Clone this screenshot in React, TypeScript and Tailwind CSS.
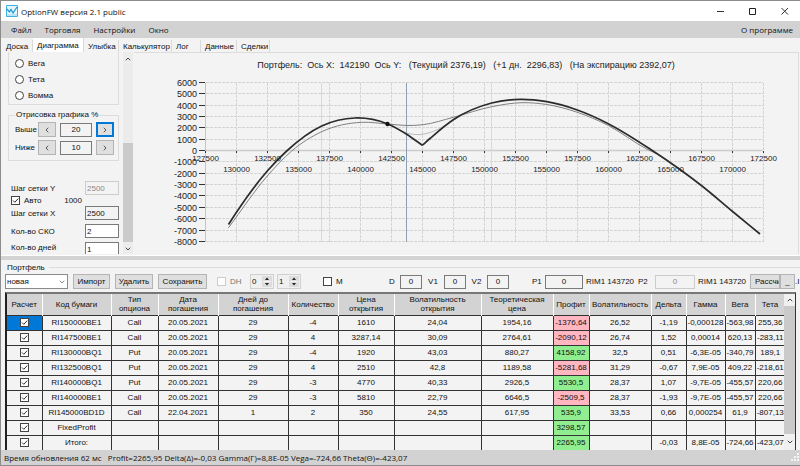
import { useState } from "react";
import type { ReactNode } from "react";
import clsx from "clsx";
import { ChevronDown, ChevronLeft, ChevronRight, ChevronUp } from "lucide-react";

const menu = ["Файл", "Торговля", "Настройки", "Окно"];

const tabs = [
  { name: "Доска", width: "w-[31px]" },
  { name: "Диаграмма", width: "w-[51px]" },
  { name: "Улыбка", width: "w-[35px]" },
  { name: "Калькулятор", width: "w-[53px]" },
  { name: "Лог", width: "w-[29px]" },
  { name: "Данные", width: "w-[36px]" },
  { name: "Сделки", width: "w-[33px]" },
];

const columns = [
  { title: "Расчет", width: "w-[35px]" },
  { title: "Код бумаги", width: "w-[69px]" },
  { title: "Тип опциона", width: "w-[47px]" },
  { title: "Дата погашения", width: "w-[60px]" },
  { title: "Дней до погашения", width: "w-[70px]" },
  { title: "Количество", width: "w-[50px]" },
  { title: "Цена открытия", width: "w-[56px]" },
  { title: "Волатильность открытия", width: "w-[87px]" },
  { title: "Теоретическая цена", width: "w-[72px]" },
  { title: "Профит", width: "w-[36px]" },
  { title: "Волатильность", width: "w-[62px]" },
  { title: "Дельта", width: "w-[35px]" },
  { title: "Гамма", width: "w-[39px]" },
  { title: "Вега", width: "w-[30px]" },
  { title: "Тета", width: "w-[30px]" },
];

const PROFIT = 8;

const rows = [
  ["RI150000BE1", "Call", "20.05.2021", "29", "-4", "1610", "24,04", "1954,16", "-1376,64", "26,52", "-1,19", "-0,000128", "-563,98", "255,36"],
  ["RI147500BE1", "Call", "20.05.2021", "29", "4", "3287,14", "30,09", "2764,61", "-2090,12", "26,74", "1,52", "0,00014", "620,13", "-283,11"],
  ["RI130000BQ1", "Put", "20.05.2021", "29", "-4", "1920", "43,03", "880,27", "4158,92", "32,5", "0,51", "-6,3E-05", "-340,79", "189,1"],
  ["RI132500BQ1", "Put", "20.05.2021", "29", "4", "2510", "42,8", "1189,58", "-5281,68", "31,29", "-0,67", "7,9E-05", "409,22", "-218,61"],
  ["RI140000BQ1", "Put", "20.05.2021", "29", "-3", "4770", "40,33", "2926,5", "5530,5", "28,37", "1,07", "-9,7E-05", "-455,57", "220,66"],
  ["RI140000BE1", "Call", "20.05.2021", "29", "-3", "5810", "22,79", "6646,5", "-2509,5", "28,37", "-1,93", "-9,7E-05", "-455,57", "220,66"],
  ["RI145000BD1D", "Call", "22.04.2021", "1", "2", "350", "24,55", "617,95", "535,9", "33,53", "0,66", "0,000254", "61,9", "-807,13"],
  ["FixedProfit", "", "", "", "", "", "", "", "3298,57", "", "", "", "", ""],
  ["Итого:", "", "", "", "", "", "", "", "2265,95", "", "-0,03", "8,8E-05", "-724,66", "-423,07"],
];

type Point = [number, number];

const expiryLeft: Point[] = [[94.5, 172.5], [102.3, 160.5], [133.3, 119], [152.7, 99], [187.7, 74], [221, 66], [253.7, 72], [272.7, 82.3], [288.3, 93.3]];
const expiryRight: Point[] = [[288.3, 93.3], [296, 86.5], [320, 67.3], [357.7, 51], [386, 47.3], [412.7, 49.7], [443.3, 58], [474.3, 71.7], [516, 97], [546, 117.5], [568, 134], [598, 159], [626, 182]];
const current: Point[] = [[94.5, 175.7], [133.3, 124], [157.7, 99], [187.7, 79.7], [227.7, 70.3], [253.7, 72], [272.7, 73.5], [289, 72.7], [319.3, 65.3], [357.7, 54.7], [388, 50.7], [412.7, 52.5], [443.3, 60.3], [474.3, 73.5], [512.7, 97], [522, 101.5]];
const nextDay: Point[] = [[253.7, 72], [272, 80.8], [285, 82.6], [299, 79.5], [323, 66]];

const slope = (a: Point, b: Point) => (b[1] - a[1]) / (b[0] - a[0]);

// slope of the parabola through a point and its two neighbours
const tangent = (points: Point[], i: number) => {
  const prev = points[i - 1];
  const point = points[i];
  const next = points[i + 1];
  if (!prev) return slope(point, next);
  if (!next) return slope(prev, point);
  const h0 = point[0] - prev[0];
  const h1 = next[0] - point[0];
  return (slope(prev, point) * h1 + slope(point, next) * h0) / (h0 + h1);
};

const toPath = (points: Point[]) => {
  let d = `M${points[0][0]} ${points[0][1]}`;
  for (let i = 0; i < points.length - 1; i++) {
    const [x1, y1] = points[i];
    const [x2, y2] = points[i + 1];
    const h = (x2 - x1) / 3;
    d += `C${x1 + h} ${y1 + tangent(points, i) * h} ${x2 - h} ${y2 - tangent(points, i + 1) * h} ${x2} ${y2}`;
  }
  return d;
};

const chartX = (value: number) => Math.round(72 + ((value - 127500) / 2500) * 30.98) - 0.5;
const chartY = (value: number) => Math.round(99 - (value / 1000) * 11.36) - 0.5;

const xValues = Array.from({ length: 19 }, (_, i) => 127500 + i * 2500);
const yValues = Array.from({ length: 15 }, (_, i) => 6000 - i * 1000);

const Chart = () => (
  <svg viewBox="0 1 664 201" className="block w-full" role="img" aria-label="Портфель">
    <g stroke="#d3d3d3" strokeDasharray="3 1">
      {xValues.slice(1).map((x) => (
        <path key={x} d={`M${chartX(x)} 31V190`} />
      ))}
      {yValues.map((y) => (
        <path key={y} d={`M72 ${chartY(y)}H629`} />
      ))}
    </g>
    <path d="M71.5 31V190" stroke="#c4c4c4" />
    <path d="M72 98.5H629" stroke="#cccccc" strokeWidth="1.5" />
    <path d="M187.5 31V190M357.5 31V190" stroke="#f8cdd0" />
    <path d="M272.5 31V190" stroke="#8f9fb2" />
    <g stroke="#333">
      {yValues.map((y) => (
        <path key={y} d={`M65 ${chartY(y)}H71`} />
      ))}
      {xValues.map((x) => (
        <path key={x} d={`M${chartX(x)} 99V101`} />
      ))}
    </g>
    <g fill="none">
      <path d={toPath(nextDay)} stroke="#bcbcbc" />
      <path d={toPath(current)} stroke="#808080" />
      <path d={toPath(expiryLeft) + toPath(expiryRight)} stroke="#2b2b2b" strokeWidth="1.7" />
    </g>
    <circle cx="253.5" cy="72" r="2.2" fill="#111" />
    <g fill="#222" className="text-[9px]" textAnchor="end">
      {yValues.map((y) => (
        <text key={y} x="63" y={chartY(y) + 3.5}>
          {y}
        </text>
      ))}
    </g>
    <g fill="#222" className="text-[8px]" textAnchor="middle">
      {xValues.map((x, i) => (
        <text key={x} x={chartX(x)} y={i % 2 ? 120 : 109}>
          {x}
        </text>
      ))}
    </g>
    <text x="332" y="16" fill="#222" className="whitespace-pre text-[9px]" textAnchor="middle">
      {"Портфель:  Ось X:  142190  Ось Y:   (Текущий 2376,19)   (+1 дн.  2296,83)   (На экспирацию 2392,07)"}
    </text>
  </svg>
);

const Check = ({ label, checked, disabled }: { label: string; checked?: boolean; disabled?: boolean }) => (
  <span className="grid h-[9px] w-[9px] shrink-0">
    <input
      type="checkbox"
      aria-label={label}
      defaultChecked={checked}
      disabled={disabled}
      className="peer col-start-1 row-start-1 h-[9px] w-[9px] appearance-none border border-[#444] bg-white disabled:border-[#ccc]"
    />
    <svg viewBox="0 0 9 9" className="pointer-events-none invisible col-start-1 row-start-1 peer-checked:visible">
      <path d="M2 4.5L3.8 6.3L7.2 2.6" fill="none" stroke="#333" />
    </svg>
  </span>
);

const Button = ({ children, className }: { children: ReactNode; className?: string }) => (
  <button
    type="button"
    className={clsx("flex h-[15px] shrink-0 items-center justify-center overflow-hidden border border-[#b4b4b4] bg-[#dfdfdf]", className)}
  >
    {children}
  </button>
);

const Box = ({ label, value, className, disabled }: { label: string; value: string; className?: string; disabled?: boolean }) => (
  <input
    type="text"
    aria-label={label}
    defaultValue={value}
    disabled={disabled}
    className={clsx("h-[14px] min-w-0 shrink-0 border border-[#7a7a7a] disabled:border-[#ccc] disabled:text-[#8a8a8a]", className)}
  />
);

const Spinner = ({ label, value }: { label: string; value: string }) => (
  <span className="flex h-[15px] w-[24px] shrink-0 items-center border border-[#d0d0d0] bg-[#f0f0f0]">
    <input type="text" aria-label={label} defaultValue={value} className="w-[11px] pl-px" />
    <svg viewBox="0 0 10 11" className="h-[11px] w-[10px]">
      <path d="M0 0H10V11H0Z" fill="#dcdcdc" />
      <path d="M3 4L5 1.5L7 4ZM3 7L5 9.5L7 7Z" fill="#222" />
      <path d="M1 5.5H9" stroke="#f6f6f6" />
    </svg>
  </span>
);

const TitleBar = () => (
  <header className="flex h-[21px] items-center border-t border-[#8c8c8c] bg-white pr-[11px] pl-[5px]">
    <svg viewBox="0 0 12 12" className="h-[12px] w-[12px]">
      <path d="M.5.5H11.5V11.5H.5Z" fill="#e8f6fc" stroke="#3db2e2" />
      <path d="M1 4L3.5 7L5 4.5L7 8L11 2" fill="none" stroke="#1c9bd6" strokeWidth="1.3" />
      <path d="M1 10H11" stroke="#8dd3f0" />
    </svg>
    <h1 className="ml-[3px] flex-1 font-['Open_Sans']">OptionFW версия 2.1 public</h1>
    <div className="flex gap-[24px]">
      <button type="button" aria-label="Свернуть">
        <svg viewBox="0 0 8 8" className="h-2 w-2"><path d="M0 4.5H7" stroke="#333" /></svg>
      </button>
      <button type="button" aria-label="Развернуть">
        <svg viewBox="0 0 8 8" className="h-2 w-2"><path d="M.5 1.5H6.5V7.5H.5Z" fill="none" stroke="#222" /></svg>
      </button>
      <button type="button" aria-label="Закрыть">
        <svg viewBox="0 0 8 8" className="h-2 w-2"><path d="M.5 1L7 7.5M7 1L.5 7.5" stroke="#333" /></svg>
      </button>
    </div>
  </header>
);

const Sidebar = () => (
  <aside className="flex w-[133px] shrink-0 justify-between overflow-hidden">
    <div className="ml-[7px] w-[111px]">
      <div className="h-[53px] border border-t-0 border-[#dcdcdc] pt-[3px] pl-[6px]">
        {["Вега", "Тета", "Вомма"].map((name) => (
          <label key={name} className="flex h-4 items-center gap-1">
            <input type="radio" name="greek" className="h-[9px] w-[9px] appearance-none rounded-full border border-[#444] bg-white checked:border-[3px]" />
            {name}
          </label>
        ))}
      </div>
      <fieldset className="mt-[5px] h-[51px] border border-[#dcdcdc] pl-[6px]">
        <legend className="px-px leading-[10px]">Отрисовка графика %</legend>
        {[["Выше", "20"], ["Ниже", "10"]].map(([name, value]) => (
          <div key={name} className="mt-px flex h-[17px] items-center">
            <span className="w-[23px]">{name}</span>
            <Button className="w-[18px]"><ChevronLeft size={8} /></Button>
            <Box label={name} value={value} className="mx-1 w-[32px] text-center" />
            <Button className={clsx("w-[18px]", name === "Выше" && "outline-2 -outline-offset-2 outline-[#0078d7]")}>
              <ChevronRight size={8} />
            </Button>
          </div>
        ))}
      </fieldset>
      <div className="mt-[20px] flex items-center justify-between pl-[3px]">
        Шаг сетки Y
        <Box label="Шаг сетки Y" value="2500" disabled className="w-[34px] px-px" />
      </div>
      <div className="flex h-[11px] items-center pl-[3px]">
        <Check label="Авто" checked />
        <span className="ml-1">Авто</span>
        <span className="ml-auto pr-[37px]">1000</span>
      </div>
      <div className="flex items-center justify-between pl-[3px]">
        Шаг сетки X
        <Box label="Шаг сетки X" value="2500" className="w-[34px] px-px" />
      </div>
      <div className="mt-1 flex items-center justify-between pl-[3px]">
        Кол-во СКО
        <Box label="Кол-во СКО" value="2" className="w-[34px] bg-white px-px" />
      </div>
      <div className="mt-1 flex h-[12px] items-start justify-between overflow-hidden pl-[3px]">
        Кол-во дней
        <Box label="Кол-во дней" value="1" className="w-[34px] bg-white px-px" />
      </div>
    </div>
    <div className="mr-px flex w-[10px] flex-col items-center justify-between bg-[#ececec] text-[#444]">
      <ChevronUp size={8} strokeWidth={3} className="mt-[3px]" />
      <div className="mt-auto h-[99px] w-full bg-[#cacaca]" />
      <ChevronDown size={8} strokeWidth={3} className="mt-[3px] mb-px" />
    </div>
  </aside>
);

const Toolbar = () => (
  <div className="flex h-[15px] items-center overflow-hidden pl-1 whitespace-nowrap">
    <div className="grid w-[63px] shrink-0 items-center">
      <select aria-label="Портфель" className="col-start-1 row-start-1 h-[15px] appearance-none border border-[#8a8a8a] bg-white pl-px">
        <option>новая</option>
      </select>
      <ChevronDown size={8} className="pointer-events-none col-start-1 row-start-1 mr-[2px] justify-self-end text-[#555]" />
    </div>
    <Button className="ml-[5px] w-[37px]">Импорт</Button>
    <Button className="ml-[5px] w-[38px]">Удалить</Button>
    <Button className="ml-[5px] w-[49px]">Сохранить</Button>
    <div className="ml-[10px] flex w-[33px] shrink-0 items-center gap-1 text-[#777]">
      <Check label="DH" disabled /> DH
    </div>
    <Spinner label="DH от" value="0" />
    <span className="w-[3px] shrink-0" />
    <Spinner label="DH до" value="1" />
    <div className="ml-[22px] flex w-[66px] shrink-0 items-center gap-1">
      <Check label="M" /> M
    </div>
    <span className="w-[11px] shrink-0">D</span>
    <Box label="D" value="0" className="w-[22px] text-center" />
    <span className="w-[22px] shrink-0 text-center">V1</span>
    <Box label="V1" value="0" className="w-[22px] text-center" />
    <span className="w-[21px] shrink-0 text-center">V2</span>
    <Box label="V2" value="0" className="w-[22px] text-center" />
    <span className="ml-[23px] w-[13px] shrink-0">P1</span>
    <Box label="P1" value="0" className="w-[38px] text-center" />
    <span className="ml-[3px] w-[52px] shrink-0">RIM1 143720</span>
    <span className="w-[17px] shrink-0">P2</span>
    <Box label="P2" value="0" disabled className="w-[40px] text-center" />
    <span className="ml-[3px] w-[52px] shrink-0">RIM1 143720</span>
    <button type="button" className="h-[15px] w-[30px] shrink-0 overflow-hidden border border-[#b4b4b4] bg-[#dfdfdf] pl-[4px] text-left">
      Рассчи
    </button>
    <Button className="w-[15px]">_</Button>
    <span className="shrink-0">.I</span>
  </div>
);

const Positions = () => (
  <div className="mt-[3px] mr-1 ml-1 flex min-h-0 flex-1 overflow-hidden border-t-2 border-r border-l-2 border-t-[#777] border-r-[#333] border-l-[#222]">
    <div className="min-w-0 flex-1">
      <table className="w-full table-fixed text-center">
        <thead>
          <tr className="h-[21px] bg-[#d3d3d3]">
            {columns.map((column) => (
              <th key={column.title} className={clsx("border-r border-white p-0 leading-[9px] font-normal", column.width)}>
                {column.title}
              </th>
            ))}
          </tr>
        </thead>
        <tbody>
          {rows.map((row, index) => (
            <tr key={row[0]} className="h-[15px] leading-[13px]">
              <td className={clsx("border border-l-0 border-[#333] p-0", index === 0 && "bg-[#0078d7]")}>
                <div className="flex justify-center">
                  <Check label={row[0]} checked />
                </div>
              </td>
              {row.map((value, i) => (
                <td
                  key={i}
                  className={clsx(
                    "border border-[#333] p-0 whitespace-nowrap last:border-r-0",
                    i === PROFIT && (value.startsWith("-") ? "bg-[#ffb6c1]" : "bg-[#90ee90]"),
                  )}
                >
                  {value}
                </td>
              ))}
            </tr>
          ))}
        </tbody>
      </table>
    </div>
    <div className="flex w-[11px] shrink-0 flex-col items-center bg-[#f0f0f0] text-[#444]">
      <ChevronUp size={8} strokeWidth={3} className="my-[2px] shrink-0" />
      <div className="w-full flex-1 bg-[#cacaca]" />
      <ChevronDown size={8} strokeWidth={3} className="my-1 shrink-0" />
    </div>
  </div>
);

const App = () => {
  const [active, setActive] = useState("Диаграмма");

  return (
    <div className="flex h-screen flex-col overflow-hidden border-l border-[#8c8c8c] bg-[#f3f3f3] font-['Liberation_Sans',Arial,sans-serif] text-[8px] leading-[11px] text-[#111]">
      <TitleBar />
      <nav className="flex h-[17px] items-center gap-[13px] bg-[#d2d2d2] pr-[7px] pl-[10px] font-['Open_Sans']">
        {menu.map((item) => (
          <button key={item} type="button">{item}</button>
        ))}
        <button type="button" className="ml-auto">О программе</button>
      </nav>
      <div className="flex h-[14px] items-end pl-px" role="tablist">
        {tabs.map((tab) => (
          <button
            key={tab.name}
            type="button"
            role="tab"
            aria-selected={active === tab.name}
            onClick={() => setActive(tab.name)}
            className={clsx(
              "border-r border-[#dadada] pl-1 text-left whitespace-nowrap",
              tab.width,
              active === tab.name ? "h-[14px] bg-white" : "h-[12px]",
            )}
          >
            {tab.name}
          </button>
        ))}
      </div>
      <main className="mr-[1px] flex border-r border-[#dcdcdc]">
        <Sidebar />
        <div className="min-w-0 flex-1 border-t border-[#dcdcdc]">
          <Chart />
        </div>
      </main>
      <div className="mt-px h-[5px] shrink-0 border-t border-white bg-[#d3d3d3]" />
      <div className="flex h-[14px] shrink-0 items-center gap-1 pl-[6px]">
        <h2>Портфель</h2>
        <div className="h-px flex-1 bg-[#dcdcdc]" />
      </div>
      <Toolbar />
      <Positions />
      <footer className="flex h-[16px] shrink-0 items-center justify-between border-b border-[#8c8c8c] bg-[#d2d2d2] pl-[3px] font-['Open_Sans'] whitespace-pre">
        {"Время обновления 62 мс   Profit=2265,95 Delta(Δ)=-0,03 Gamma(Γ)=8,8E-05 Vega=-724,66 Theta(Θ)=-423,07"}
        <svg viewBox="0 0 9 9" className="h-[9px] w-[9px]">
          <path d="M6 1H8M3 4H5M6 4H8M0 7H2M3 7H5M6 7H8" stroke="#f5f5f5" strokeWidth="2" />
        </svg>
      </footer>
    </div>
  );
};

export default App;
